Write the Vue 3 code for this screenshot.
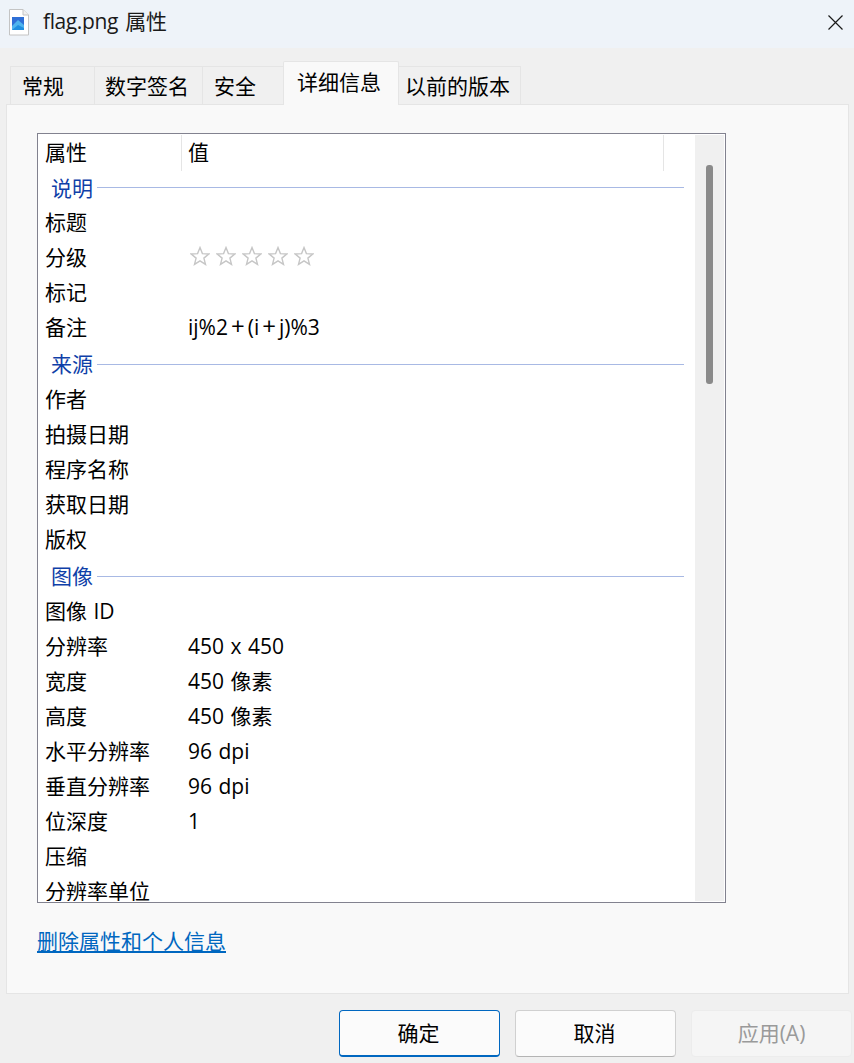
<script setup>
const tabs = [
  { label: '常规', w: 85, pad: 11 },
  { label: '数字签名', w: 109, pad: 10 },
  { label: '安全', w: 82, pad: 11 },
  { label: '详细信息', w: 116, pad: 13, active: true },
  { label: '以前的版本', w: 123, pad: 6 }
]
const rows = [
  { g: '说明' },
  { k: '标题' },
  { k: '分级', stars: true },
  { k: '标记' },
  { k: '备注', v: 'ij%2+(i+j)%3' },
  { g: '来源' },
  { k: '作者' },
  { k: '拍摄日期' },
  { k: '程序名称' },
  { k: '获取日期' },
  { k: '版权' },
  { g: '图像' },
  { k: '图像 ID' },
  { k: '分辨率', v: '450 x 450' },
  { k: '宽度', v: '450 像素' },
  { k: '高度', v: '450 像素' },
  { k: '水平分辨率', v: '96 dpi' },
  { k: '垂直分辨率', v: '96 dpi' },
  { k: '位深度', v: '1' },
  { k: '压缩' },
  { k: '分辨率单位' }
].map((r) => ({ ...r, parts: r.v ? r.v.split('+') : [] }))
</script>

<template>
  <div class="win">
    <header class="title">
      <svg class="file" width="22" height="28" viewBox="0 0 22 28">
        <path d="M1.5 1.5H15L20.5 7V27H1.5Z" fill="#fff" stroke="#c4c4c4" />
        <path d="M15 1.5V7H20.5" fill="#f0f0f0" stroke="#c4c4c4" />
        <rect x="4" y="9" width="12" height="13" fill="#2f6fd6" />
        <path d="M4 18L10 12L16 17V22H4Z" fill="#4fb4ee" />
        <path d="M4 22L10 17L16 20V22Z" fill="#1f8fe0" />
      </svg>
      <span class="title-text">flag.png 属性</span>
      <svg class="close" width="15" height="15" viewBox="0 0 15 15">
        <path d="M0.5 0.5L14.5 14.5M14.5 0.5L0.5 14.5" stroke="#1a1a1a" stroke-width="1.2" fill="none" />
      </svg>
    </header>

    <nav class="tabs">
      <div
        v-for="t in tabs"
        :key="t.label"
        class="tab"
        :class="{ active: t.active }"
        :style="{ width: t.w + 'px', paddingLeft: t.pad + 'px' }"
      >{{ t.label }}</div>
    </nav>

    <main class="panel">
      <section class="list">
        <div class="list-main">
          <div class="head">
            <div class="hcol hname">属性</div>
            <div class="hcol hval">值</div>
          </div>
          <template v-for="(r, i) in rows" :key="r.g || r.k">
            <div v-if="r.g" class="group" :class="{ later: i > 0 }">
              <span class="group-label">{{ r.g }}</span>
              <span class="group-line"></span>
            </div>
            <div v-else class="row">
              <span class="cell-k">{{ r.k }}</span>
              <span v-if="r.stars" class="stars">
                <svg v-for="n in 5" :key="n" width="20" height="20" viewBox="0 0 20 20">
                  <path d="M10 1.6L12.4 7.6L18.8 8L13.9 12.1L15.5 18.4L10 14.9L4.5 18.4L6.1 12.1L1.2 8L7.6 7.6Z" fill="none" stroke="#c6c6c6" stroke-width="1.4" />
                </svg>
              </span>
              <span v-else class="cell-v"><template v-for="(p, j) in r.parts" :key="j"><span v-if="j > 0" class="plus">+</span>{{ p }}</template></span>
            </div>
          </template>
        </div>
        <div class="scroll"><div class="thumb"></div></div>
      </section>
      <a class="link">删除属性和个人信息</a>
    </main>

    <footer class="foot">
      <button class="btn primary">确定</button>
      <button class="btn">取消</button>
      <button class="btn disabled">应用(A)</button>
    </footer>
  </div>
</template>

<style scoped>
.win {
  width: 854px;
  height: 1063px;
  overflow: hidden;
  background: #f0f0f0;
  font-family: "Open Sans", "Noto Sans CJK SC", sans-serif;
  font-size: 21px;
  color: #000;
  display: flex;
  flex-direction: column;
}
.title {
  height: 48px;
  flex: none;
  background: #eef3f9;
  display: flex;
  align-items: center;
  padding: 0 11px 0 8px;
  box-sizing: border-box;
}
.file { flex: none; margin-top: -4px; }
.title-text { margin-left: 13px; color: #1a1a1a; flex: 1; line-height: 48px; margin-top: -7px; letter-spacing: -0.4px; word-spacing: 2.4px; }
.close { margin-top: -3px; }
.tabs {
  height: 56px;
  flex: none;
  display: flex;
  align-items: flex-end;
  padding-left: 10px;
  box-sizing: border-box;
  position: relative;
  z-index: 1;
}
.tab {
  height: 38px;
  box-sizing: border-box;
  border: 1px solid #e5e5e5;
  border-bottom: none;
  margin-right: -1px;
  background: #f0f0f0;
  line-height: 38px;
  white-space: nowrap;
}
.tab.active {
  height: 44px;
  margin-bottom: -1px;
  background: #f9f9f9;
  border-radius: 2px 2px 0 0;
  line-height: 40px;
  z-index: 1;
}
.panel {
  margin: 0 5px 0 6px;
  height: 890px;
  flex: none;
  box-sizing: border-box;
  border: 1px solid #e5e5e5;
  background: #f9f9f9;
  padding: 28px 0 0 30px;
  display: flex;
  flex-direction: column;
  align-items: flex-start;
}
.list {
  width: 689px;
  height: 770px;
  flex: none;
  box-sizing: border-box;
  border: 1px solid #82828f;
  background: #fff;
  display: flex;
  overflow: hidden;
  padding: 1px 1px 1px 0;
}
.list-main { flex: 1; min-width: 0; overflow: hidden; word-spacing: 1px; }
.head { height: 36px; display: flex; }
.hcol { height: 36px; line-height: 34px; box-sizing: border-box; }
.hname { width: 144px; padding-left: 7px; border-right: 1px solid #e5e5e5; }
.hval { width: 482px; padding-left: 6px; border-right: 1px solid #e5e5e5; }
.group { height: 34px; display: flex; align-items: center; padding-left: 13px; box-sizing: border-box; }
.group.later { height: 37px; padding-top: 1px; }
.group-label { color: #0f3fa8; line-height: 34px; margin-top: -1px; }
.group-line { width: 587px; height: 1px; background: #a8b9e4; margin-left: 4px; margin-top: -2px; }
.group.later .group-line { margin-top: 1px; }
.row { height: 35px; display: flex; align-items: center; line-height: 35px; white-space: nowrap; }
.cell-k { width: 150px; padding-left: 7px; box-sizing: border-box; flex: none; margin-top: -1px; }
.cell-v { margin-top: -1px; }
.plus { font-size: 24px; line-height: 1; margin: 0 3px; }
.stars { display: flex; gap: 6px; margin-left: 2px; margin-top: -3px; }
.stars svg { display: block; }
.scroll { width: 29px; flex: none; background: #f0f0f0; position: relative; }
.thumb {
  position: absolute;
  left: 11px;
  top: 30px;
  width: 7px;
  height: 219px;
  background: #8a8a8a;
  border-radius: 3px;
}
.link {
  margin-top: 24px;
  color: #0067c0;
  text-decoration: underline;
  line-height: 28px;
}
.foot {
  flex: 1;
  display: flex;
  justify-content: flex-end;
  gap: 15px;
  padding: 16px 2px 0 0;
  align-items: flex-start;
}
.btn {
  width: 161px;
  height: 47px;
  box-sizing: border-box;
  border: 1px solid #d0d0d0;
  border-bottom-color: #b4b4b4;
  border-radius: 4px;
  background: #fbfbfb;
  font: inherit;
  color: #000;
  padding: 0 2px 3px 0;
}
.btn.primary { border: 1px solid #0067c0; border-bottom-width: 2px; }
.btn.disabled { background: #f5f5f5; border-color: #ececec; color: #9a9a9a; padding-right: 0; }
</style>

<style>
html, body { margin: 0; padding: 0; }
</style>
